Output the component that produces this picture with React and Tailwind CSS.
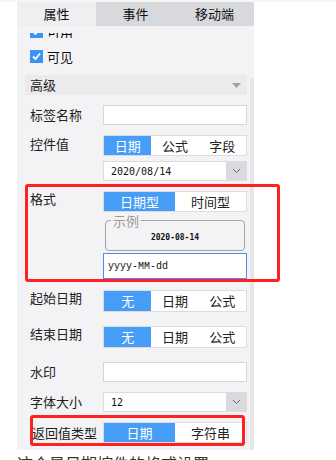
import React from "react";

const cjk = { fontFamily: '"Noto Sans CJK SC", "Noto Sans", sans-serif' };

function Check() {
  return (
    <span className="w-[13px] h-[13px] bg-[#3b93f5] flex items-center justify-center shrink-0">
      <svg width="11" height="11" viewBox="0 0 11 11">
        <path d="M2 5.5 L4.5 8 L9 2.5" stroke="white" strokeWidth="1.8" fill="none" />
      </svg>
    </span>
  );
}

function Segmented({ items, active = 0, className = "h-[22px]" }) {
  return (
    <div className={"flex w-[144px] border border-[#dcdcde] bg-white " + className}>
      {items.map((t, i) => (
        <div
          key={t}
          className={
            "flex-1 flex items-center justify-center text-[13px] " +
            (i === active ? "bg-[#459df5] text-white" : "text-[#222]")
          }
        >
          {t}
        </div>
      ))}
    </div>
  );
}

function Select({ value }) {
  return (
    <div className="flex w-[144px] h-[20px] border border-[#dcdcde] bg-white">
      <div className="flex-1 flex items-center pl-[7px] text-[10px] text-[#111]" style={{ fontFamily: '"DejaVu Sans Mono", monospace' }}>
        {value}
      </div>
      <div className="w-[20px] bg-[#d9dadd] flex items-center justify-center">
        <svg width="9" height="6" viewBox="0 0 9 6">
          <path d="M1 1 L4.5 4.5 L8 1" stroke="#666" strokeWidth="1" fill="none" />
        </svg>
      </div>
    </div>
  );
}

function Row({ label, children, className = "mt-[10px]", align = "items-center", labelClass = "" }) {
  return (
    <div className={"flex pl-[13px] " + align + " " + className}>
      <div className={"w-[73px] text-[13px] text-[#222] " + labelClass}>{label}</div>
      {children}
    </div>
  );
}

export default function App() {
  return (
    <div className="relative w-[336px] h-[460px] bg-white overflow-hidden" style={cjk}>
      <div className="h-[2px] bg-[#f6f6f6]" />
      <div className="ml-[17px] w-[237px]">
        <div className="flex h-[24px] bg-[#d8d9dc] text-[13px] text-[#111]">
          <div className="flex-1 bg-[#efeff1] flex items-center justify-center">属性</div>
          <div className="flex-1 flex items-center justify-center">事件</div>
          <div className="flex-1 flex items-center justify-center">移动端</div>
        </div>

        <div className="flex bg-[#f3f3f5]">
          <div className="w-[233px] pb-[7px]">
            <div className="mt-[7px] h-[5px] overflow-hidden">
              <div className="-mt-[8px] pl-[13px] flex items-center gap-[4px] text-[13px] leading-[13px]">
                <Check />
                <span>可用</span>
              </div>
            </div>
            <div className="mt-[12px] pl-[13px] flex items-center gap-[4px] text-[13px] leading-[13px] text-[#111]">
              <Check />
              <span>可见</span>
            </div>

            <div className="mt-[12px] ml-[8px] w-[222px] h-[20px] bg-[#ebebed] flex items-center justify-between pl-[5px] pr-[6px] text-[13px] text-[#222]">
              <span>高级</span>
              <svg width="9" height="5" viewBox="0 0 9 5">
                <path d="M0 0 L9 0 L4.5 5 Z" fill="#a3a3a3" />
              </svg>
            </div>

            <Row label="标签名称">
              <div className="w-[144px] h-[20px] border border-[#d6d6d8] bg-white" />
            </Row>

            <Row label="控件值" align="items-start" labelClass="leading-[17px]">
              <div className="flex flex-col gap-[5px]">
                <Segmented items={["日期", "公式", "字段"]} className="h-[21px]" />
                <Select value="2020/08/14" />
              </div>
            </Row>

            <Row label="格式" align="items-start" labelClass="leading-[15px]">
              <div className="flex flex-col">
                <Segmented items={["日期型", "时间型"]} className="h-[21px]" />
                <fieldset className="mt-[1px] ml-[2px] w-[140px] h-[38px] border border-[#a3a3a3] rounded-[4px] px-[4px]">
                  <legend className="ml-[1px] px-[2px] text-[13px] leading-[15px] text-[#9a9a9a]">示例</legend>
                  <div className="mt-[2px] text-center text-[8px] leading-[16px] font-bold text-[#111]" style={{ fontFamily: '"DejaVu Sans Mono", monospace' }}>
                    2020-08-14
                  </div>
                </fieldset>
                <div className="mt-[2px] w-[144px] h-[26px] border border-[#4a8df0] bg-white flex items-center pl-[4px] text-[10px] text-[#111]" style={{ fontFamily: '"Liberation Mono", monospace' }}>
                  yyyy-MM-dd
                </div>
              </div>
            </Row>

            <Row label="起始日期" className="mt-[11px]" align="items-start" labelClass="leading-[15px]">
              <Segmented items={["无", "日期", "公式"]} />
            </Row>
            <Row label="结束日期" className="mt-[14px]" align="items-start" labelClass="leading-[15px]">
              <Segmented items={["无", "日期", "公式"]} />
            </Row>
            <Row label="水印" className="mt-[14px]">
              <div className="w-[144px] h-[20px] border border-[#d6d6d8] bg-white" />
            </Row>
            <Row label="字体大小">
              <Select value="12" />
            </Row>
            <Row label="返回值类型" labelClass="pl-[2px]">
              <Segmented items={["日期", "字符串"]} className="h-[21px]" />
            </Row>
          </div>
          <div className="w-[4px] flex flex-col">
            <div className="h-[52px]" />
            <div className="flex-1 bg-[#e6e6e8]" />
          </div>
        </div>

        <div className="mt-[3px] text-[16px] leading-[20px] text-[#333] whitespace-nowrap">这个是日期控件的格式设置</div>
      </div>

      <div className="absolute left-[25px] top-[184px] w-[255px] h-[98px] border-[3px] border-[#ff2020] rounded-[3px]" />
      <div className="absolute left-[30px] top-[415px] w-[215px] h-[31px] border-[3px] border-[#ff2020] rounded-[3px]" />
    </div>
  );
}
